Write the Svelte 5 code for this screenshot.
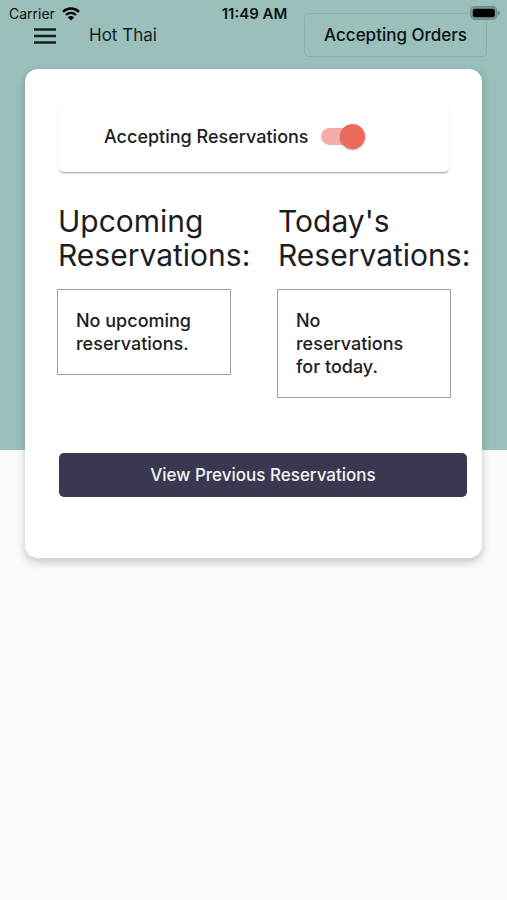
<script lang="ts">
    let restaurant = 'Hot Thai';
    let acceptingReservations = true;

    const sections = [
        {title: 'Upcoming Reservations:', empty: 'No upcoming reservations.'},
        {title: "Today's Reservations:", empty: 'No reservations for today.'}
    ];
</script>

<div class="page">
    <div class="status-bar">
        <div class="status-bar__carrier">
            <span>Carrier</span>
            <svg width="18" height="14" viewBox="0 0 18 14" aria-hidden="true">
                <path d="M1 4.9a11.4 11.4 0 0 1 16 0" fill="none" stroke="#000" stroke-width="2.5"/>
                <path d="M4 8a7.1 7.1 0 0 1 10 0" fill="none" stroke="#000" stroke-width="2.3"/>
                <path d="M9 13.6 5.9 10.4a4.4 4.4 0 0 1 6.2 0z"/>
            </svg>
        </div>
        <span class="status-bar__time">11:49 AM</span>
        <svg class="status-bar__battery" width="30" height="14" viewBox="0 0 30 14" aria-hidden="true">
            <rect x="0.75" y="0.75" width="26" height="12.5" rx="4" fill="#7d9f99" stroke="#6c8c86" stroke-width="1.3"/>
            <rect x="2.8" y="2.8" width="22" height="8.4" rx="2"/>
            <path d="M28.2 4.8v4.4c2-.8 2-3.6 0-4.4z" fill="#5e7873"/>
        </svg>
    </div>

    <header class="toolbar">
        <button class="toolbar__menu" aria-label="Menu">
            <svg width="24" height="18" viewBox="0 0 24 18" aria-hidden="true">
                <path d="M1 3.5h22M1 10h22M1 16.5h22" stroke="#14211e" stroke-width="2.3"/>
            </svg>
        </button>
        <span class="toolbar__name">{restaurant}</span>
        <button class="toolbar__orders">Accepting Orders</button>
    </header>

    <main class="card">
        <div class="accepting">
            <label for="accepting-reservations">Accepting Reservations</label>
            <input id="accepting-reservations" class="switch" type="checkbox" role="switch"
                   bind:checked={acceptingReservations}/>
        </div>

        <div class="sections">
            {#each sections as section}
                <section>
                    <h2>{section.title}</h2>
                    <p>{section.empty}</p>
                </section>
            {/each}
        </div>

        <button class="previous">View Previous Reservations</button>
    </main>
</div>

<style>
    :global(body) {
        margin: 0;
    }

    .page {
        position: relative;
        box-sizing: border-box;
        min-height: 100vh;
        padding-bottom: 32px;
        background: linear-gradient(#9bbfba 50vh, #fafcfb 50vh);
        color: #1d1d1f;
        font-family: Inter, "Liberation Sans", sans-serif;
        font-size: 18px;
    }

    button {
        margin: 0;
        padding: 0;
        border: 0;
        background: none;
        color: inherit;
        font: inherit;
        cursor: pointer;
    }

    svg {
        display: block;
    }

    .status-bar {
        position: absolute;
        top: 4px;
        left: 0;
        right: 0;
        z-index: 1;
        display: grid;
        grid-template-columns: 1fr auto 1fr;
        align-items: center;
        padding: 0 7px 0 9px;
        color: #0b1211;
        font-size: 14px;
        line-height: 20px;
        pointer-events: none;
    }

    .status-bar__carrier {
        display: flex;
        align-items: center;
        gap: 7px;
    }

    .status-bar__time {
        font-size: 15px;
        font-weight: 600;
    }

    .status-bar__battery {
        justify-self: end;
        margin-bottom: 2px;
    }

    .toolbar {
        display: flex;
        align-items: center;
        padding: 13px 20px 12px 33px;
        color: #14211e;
        font-size: 17px;
    }

    .toolbar__name {
        flex: 1;
        margin-left: 32px;
    }

    .toolbar__orders {
        box-sizing: border-box;
        height: 44px;
        padding: 0 19px;
        border: 1px solid #8aaea8;
        border-radius: 5px;
        color: #0b1211;
        font-weight: 500;
    }

    .card {
        margin: 0 25px;
        padding: 32px 15px 61px 32px;
        border-radius: 13px;
        background: #fff;
        box-shadow: 0 4px 10px rgba(0, 0, 0, 0.22);
    }

    .accepting {
        display: flex;
        align-items: center;
        gap: 12px;
        height: 71px;
        margin: 0 18px 0 2px;
        padding-left: 45px;
        border-radius: 5px;
        box-shadow: 0 2px 2px -1px rgba(0, 0, 0, 0.35), 0 1px 2px rgba(0, 0, 0, 0.08);
        clip-path: inset(0 -4px -6px -4px);
        font-weight: 500;
    }

    .switch {
        position: relative;
        width: 44px;
        height: 25px;
        margin: 0;
        appearance: none;
        cursor: pointer;
    }

    .switch::before {
        content: "";
        position: absolute;
        inset: 4px 4px 4px 0;
        border-radius: 9px;
        background: #c4c4c4;
    }

    .switch::after {
        content: "";
        position: absolute;
        top: 0;
        left: 0;
        width: 25px;
        height: 25px;
        border-radius: 50%;
        background: #fafafa;
        box-shadow: 0 1px 2px rgba(0, 0, 0, 0.35);
    }

    .switch:checked::before {
        background: #f5aea7;
    }

    .switch:checked::after {
        left: auto;
        right: 0;
        background: #ec6a5c;
    }

    .sections {
        display: grid;
        grid-template-columns: 1fr 1fr;
        gap: 30px;
        margin: 32px 0 55px;
    }

    .sections section {
        min-width: 0;
    }

    h2 {
        margin: 0 0 17px 1px;
        font-size: 30px;
        font-weight: 400;
        line-height: 34px;
    }

    p {
        box-sizing: border-box;
        margin: 0 16px 0 0;
        padding: 19px 18px;
        border: 1px solid #a0a0a0;
        font-weight: 500;
        line-height: 23px;
    }

    .previous {
        display: block;
        width: calc(100% - 2px);
        height: 44px;
        margin-left: 2px;
        border-radius: 5px;
        background: #3a3850;
        color: #f3f3f8;
        font-size: 17px;
        font-weight: 500;
    }
</style>
